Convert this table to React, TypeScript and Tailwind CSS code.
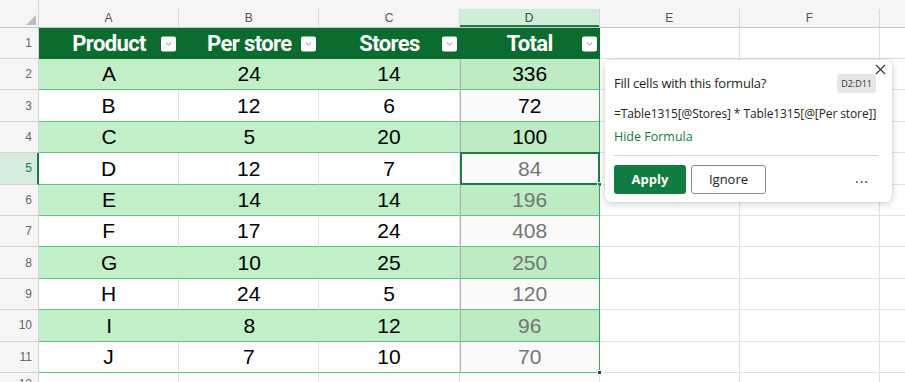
import React from "react";

const cols = ["A", "B", "C", "D", "E", "F", ""];
const headers = ["Product", "Per store", "Stores", "Total"];
const data = [
	["A", "24", "14", "336"],
	["B", "12", "6", "72"],
	["C", "5", "20", "100"],
	["D", "12", "7", "84"],
	["E", "14", "14", "196"],
	["F", "17", "24", "408"],
	["G", "10", "25", "250"],
	["H", "24", "5", "120"],
	["I", "8", "12", "96"],
	["J", "7", "10", "70"],
];

const colW = "w-[140.2px] shrink-0";

const FilterButton = () => (
	<div className="absolute right-[3px] top-1/2 -translate-y-1/2 w-[15px] h-[15px] bg-white rounded-[2px] flex items-center justify-center">
		<svg width="7" height="5" viewBox="0 0 7 5">
			<path d="M1 1.2 L3.5 3.6 L6 1.2" fill="none" stroke="#8a8a8a" strokeWidth="1" />
		</svg>
	</div>
);

const App = () => {
	return (
		<div
			className="relative w-[905px] h-[382px] overflow-hidden bg-white"
			style={{ fontFamily: '"Liberation Sans", Arial, sans-serif' }}
		>
			{/* column headers */}
			<div className="flex h-[28px] bg-[#f5f5f5] border-b border-[#c6c6c6]">
				<div className="relative w-[39px] shrink-0 border-r border-[#d4d4d4]">
					<div className="absolute left-[26px] top-[15px] w-0 h-0 border-l-[10px] border-l-transparent border-b-[10px] border-b-[#bdbdbd]" />
				</div>
				{cols.map((c, i) => (
					<div key={i} className={`${colW} flex flex-col`}>
						<div className="h-[10px]" />
						<div
							className={
								c === "D"
									? "flex-1 flex items-center justify-center text-[12px] text-[#444] bg-[#cdeed9] border-r border-[#d4d4d4] shadow-[inset_0_-2px_0_#1f7a45]"
									: "flex-1 flex items-center justify-center text-[12px] text-[#555] border-r border-[#dadada]"
							}
						>
							{c}
						</div>
					</div>
				))}
			</div>

			{/* row 1: table header */}
			<div className="flex h-[31px]">
				<div className="w-[39px] shrink-0 bg-[#f5f5f5] border-r border-b border-[#d4d4d4] flex items-center justify-end pr-[6px] text-[12px] text-[#666]">
					1
				</div>
				{headers.map((h) => (
					<div
						key={h}
						className={`${colW} relative flex items-center justify-center bg-[#0c6b2e] text-white font-bold text-[22px] tracking-[-0.6px]`}
						style={{ fontFamily: "Roboto, sans-serif" }}
					>
						{h}
						<FilterButton />
					</div>
				))}
				<div className={`${colW} border-r border-b border-[#e2e2e2]`} />
				<div className={`${colW} border-r border-b border-[#e2e2e2]`} />
				<div className={`${colW} border-b border-[#e2e2e2]`} />
			</div>

			{/* data rows */}
			{data.map((row, i) => {
				const n = i + 2;
				const green = i % 2 === 0;
				const sel = n === 5;
				return (
					<div key={n} className="flex h-[31.4px]">
						<div
							className={
								sel
									? "w-[39px] shrink-0 bg-[#d5ecdf] border-r-2 border-r-[#1f7a45] border-b border-b-[#d4d4d4] flex items-center justify-end pr-[5px] text-[12px] text-[#1f7a45]"
									: "w-[39px] shrink-0 bg-[#f5f5f5] border-r border-b border-[#d4d4d4] flex items-center justify-end pr-[6px] text-[12px] text-[#666]"
							}
						>
							{n}
						</div>
						{row.map((v, j) => {
							const isD = j === 3;
							const gray = isD && n >= 5;
							return (
								<div
									key={j}
									className={[
										colW,
										"relative flex items-center justify-center text-[21px] border-b border-[#5fc27e]",
										green ? "bg-[#c1f0c8]" : "bg-white",
										!green && j < 3 ? "border-r border-r-[#e2e2e2]" : "",
										j === 2 && green ? "border-r border-r-[#b5e3bd]" : "",
										isD ? "border-l border-l-[#b0b0b0] border-r border-r-[#3aa35f]" : "",
										gray ? "text-[#757575]" : "text-black",
									].join(" ")}
								>
									{isD && <div className="absolute inset-0 bg-black/[0.02]" />}
									<span className="relative">{v}</span>
									{isD && sel && (
										<>
											<div className="absolute -left-[1px] -top-[1px] -right-[1px] -bottom-[1px] border-2 border-[#1f7a45]" />
											<div className="absolute -right-[3px] -bottom-[3px] w-[5px] h-[5px] bg-[#1f7a45] border border-white" />
										</>
									)}
									{isD && n === 11 && (
										<div className="absolute -right-[3px] -bottom-[3px] w-[5px] h-[5px] bg-[#1c3f6e] border border-white" />
									)}
								</div>
							);
						})}
						<div className={`${colW} border-r border-b border-[#e2e2e2]`} />
						<div className={`${colW} border-r border-b border-[#e2e2e2]`} />
						<div className={`${colW} border-b border-[#e2e2e2]`} />
					</div>
				);
			})}

			{/* row 12 partial */}
			<div className="flex h-[31px]">
				<div className="w-[39px] shrink-0 bg-[#f5f5f5] border-r border-[#d4d4d4] flex items-start justify-end pr-[6px] pt-[2px] text-[12px] text-[#666]">
					12
				</div>
				{cols.map((c, i) => (
					<div key={i} className={`${colW} border-r border-[#e2e2e2]`} />
				))}
			</div>

			{/* formula suggestion card */}
			<div
				className="absolute left-[605px] top-[60px] w-[287px] h-[142px] bg-white rounded-[6px] shadow-[0_2px_8px_rgba(0,0,0,0.18),0_0_2px_rgba(0,0,0,0.12)] px-[9px] pt-[14px]"
				style={{ fontFamily: '"Open Sans", "Noto Sans", sans-serif' }}
			>
				<button className="absolute right-[4px] top-[1px] w-[16px] h-[16px] flex items-center justify-center">
					<svg width="11" height="11" viewBox="0 0 11 11">
						<path d="M1 1 L10 10 M10 1 L1 10" stroke="#333" strokeWidth="1.1" />
					</svg>
				</button>
				<div className="flex items-center justify-between">
					<span className="text-[13px] text-[#242424] tracking-[-0.2px]">Fill cells with this formula?</span>
					<span className="mr-[7px] bg-[#e6e6e6] rounded-[3px] px-[4px] h-[19px] flex items-center text-[9px] text-[#333]">
						D2:D11
					</span>
				</div>
				<div className="mt-[11px] text-[12px] text-[#242424] whitespace-nowrap tracking-[-0.1px]">
					=Table1315[@Stores] * Table1315[@[Per store]]
				</div>
				<div className="mt-[5px] text-[12.5px] text-[#0f7b4a]">Hide Formula</div>
				<div className="mt-[9px] mr-[5px] border-t border-[#d6d6d6]" />
				<div className="mt-[9px] flex items-center">
					<button className="w-[72px] h-[29px] rounded-[3px] bg-[#107c41] text-white text-[13px] font-bold">
						Apply
					</button>
					<button className="ml-[5px] w-[75px] h-[29px] rounded-[3px] border border-[#8a8a8a] text-[13px] text-[#242424]">
						Ignore
					</button>
					<span className="ml-auto mr-[14px] text-[14px] text-[#333] tracking-[1px] -mt-[4px]">...</span>
				</div>
			</div>
		</div>
	);
};

export default App;
